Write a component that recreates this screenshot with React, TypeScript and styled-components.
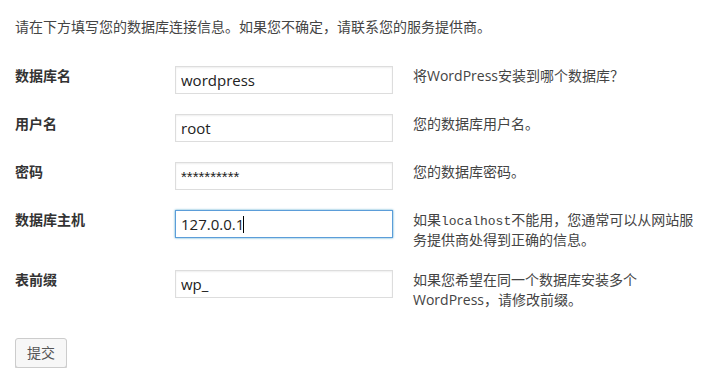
import React from "react";
import styled, { createGlobalStyle } from "styled-components";

const GlobalStyle = createGlobalStyle`
  html, body {
    margin: 0;
    padding: 0;
    background: #fff;
  }
  body {
    font-family: "Open Sans", "Noto Sans CJK SC", sans-serif;
    color: #444;
    font-size: 14px;
  }
`;

const Page = styled.div`
  padding: 17px 15px 0 15px;
`;

const Intro = styled.p`
  margin: 0 0 19px;
  font-size: 14px;
  line-height: 20px;
`;

const FormTable = styled.div`
  display: grid;
  grid-template-columns: 160px 218px 305px;
`;

const Row = styled.div`
  display: contents;
`;

const Label = styled.div`
  padding: 10px 0;
  font-weight: 600;
  font-size: 14px;
  line-height: 20px;
  color: #333;
`;

const Cell = styled.div`
  padding: 10px 0;
`;

const FieldWrap = styled.div`
  position: relative;
  width: 218px;
`;

const Caret = styled.span`
  position: absolute;
  left: 68px;
  top: 6px;
  width: 1px;
  height: 17px;
  background: #000;
`;

const Desc = styled.div`
  padding: 10px 0 10px 20px;
  font-size: 14px;
  line-height: 20px;
  color: #444;
`;

const Code = styled.code`
  font-family: "Liberation Mono", "DejaVu Sans Mono", monospace;
  font-size: 13px;
  line-height: 1;
`;

const Field = styled.input<{ $focused?: boolean; $masked?: boolean }>`
  box-sizing: border-box;
  display: block;
  width: 218px;
  height: 28px;
  margin: 0;
  padding: 3px 5px;
  font-family: ${(p) =>
    p.$masked
      ? '"Liberation Sans", Arial, sans-serif'
      : '"Open Sans", "Noto Sans CJK SC", sans-serif'};
  font-size: 15px;
  line-height: 20px;
  color: #222;
  background: #fff;
  border: 1px solid ${(p) => (p.$focused ? "#5b9dd9" : "#ddd")};
  border-radius: 0;
  box-shadow: ${(p) =>
    p.$focused
      ? "0 0 2px rgba(30, 140, 190, 0.8)"
      : "inset 0 1px 2px rgba(0, 0, 0, 0.07)"};
  outline: none;
`;

const Actions = styled.div`
  margin-top: 18px;
`;

const Button = styled.button`
  box-sizing: border-box;
  height: 30px;
  width: 52px;
  padding: 0 10px;
  font-family: "Open Sans", "Noto Sans CJK SC", sans-serif;
  font-size: 14px;
  line-height: 28px;
  color: #555;
  background: #f7f7f7;
  border: 1px solid #ccc;
  border-radius: 3px;
  box-shadow: 0 1px 0 #ccc;
  cursor: pointer;
`;

type FieldRow = {
  label: string;
  value: string;
  desc: React.ReactNode;
  focused?: boolean;
  masked?: boolean;
};

const rows: FieldRow[] = [
  { label: "数据库名", value: "wordpress", desc: <>将WordPress安装到哪个数据库？</> },
  { label: "用户名", value: "root", desc: <>您的数据库用户名。</> },
  { label: "密码", value: "**********", masked: true, desc: <>您的数据库密码。</> },
  {
    label: "数据库主机",
    value: "127.0.0.1",
    focused: true,
    desc: (
      <>
        如果<Code>localhost</Code>不能用，您通常可以从网站服务提供商处得到正确的信息。
      </>
    ),
  },
  {
    label: "表前缀",
    value: "wp_",
    desc: <>如果您希望在同一个数据库安装多个WordPress，请修改前缀。</>,
  },
];

export default function App() {
  return (
    <>
      <GlobalStyle />
      <Page>
        <Intro>请在下方填写您的数据库连接信息。如果您不确定，请联系您的服务提供商。</Intro>
        <FormTable>
          {rows.map((r) => (
            <Row key={r.label}>
              <Label>{r.label}</Label>
              <Cell>
                <FieldWrap>
                  <Field
                    $focused={r.focused}
                    $masked={r.masked}
                    defaultValue={r.value}
                    type="text"
                  />
                  {r.focused && <Caret />}
                </FieldWrap>
              </Cell>
              <Desc>{r.desc}</Desc>
            </Row>
          ))}
        </FormTable>
        <Actions>
          <Button type="submit">提交</Button>
        </Actions>
      </Page>
    </>
  );
}
